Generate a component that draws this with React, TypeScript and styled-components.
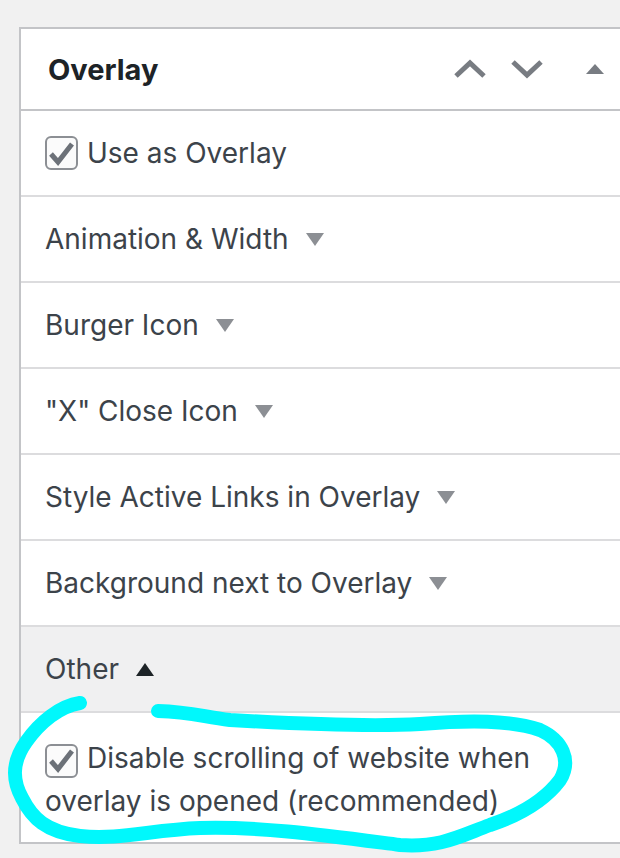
import React from "react";
import styled, { createGlobalStyle } from "styled-components";

const GlobalStyle = createGlobalStyle`
  html, body {
    margin: 0;
    padding: 0;
    background: #f1f1f1;
  }
  body {
    font-family: Inter, "Liberation Sans", sans-serif;
    overflow: hidden;
  }
`;

const Page = styled.div`
  position: relative;
  width: 620px;
  height: 858px;
  overflow: hidden;
  padding: 27px 0 0 19px;
  box-sizing: border-box;
`;

const Panel = styled.div`
  width: 640px;
  background: #fff;
  border: 2px solid #c3c4c7;
  border-right: none;
`;

const Header = styled.div`
  height: 80px;
  display: flex;
  align-items: center;
  padding: 0 46px 0 27px;
  border-bottom: 2px solid #c3c4c7;
`;

const Title = styled.h2`
  margin: 0;
  flex: 1;
  font-size: 29px;
  font-weight: 700;
  color: #1d2327;
`;

const HeaderButton = styled.button<{ $narrow?: boolean }>`
  width: ${(p) => (p.$narrow ? "40px" : "57px")};
  margin-left: ${(p) => (p.$narrow ? "20px" : "0")};
  height: 40px;
  padding: 0;
  border: none;
  background: none;
  display: flex;
  align-items: center;
  justify-content: center;
`;

const Row = styled.div<{ $shade?: boolean }>`
  height: 84px;
  display: flex;
  align-items: center;
  padding: 0 24px;
  border-bottom: 2px solid #dcdcde;
  background: ${(p) => (p.$shade ? "#f0f0f1" : "#fff")};
  font-size: 28px;
  color: #3c434a;
`;

const WrapRow = styled.div`
  padding: 24px 60px 19px 24px;
  font-size: 28px;
  line-height: 43px;
  color: #3c434a;
`;

const Caret = styled.span<{ $up?: boolean; $dark?: boolean }>`
  display: inline-block;
  margin-left: 17px;
  width: 0;
  height: 0;
  border-left: 9px solid transparent;
  border-right: 9px solid transparent;
  ${(p) =>
    p.$up
      ? `border-bottom: 13px solid ${p.$dark ? "#1d2327" : "#8c8f94"};`
      : `border-top: 13px solid ${p.$dark ? "#1d2327" : "#8c8f94"};`}
`;

const Box = styled.span`
  display: inline-flex;
  align-items: center;
  justify-content: center;
  width: 33px;
  height: 34px;
  box-sizing: border-box;
  border: 2px solid #8c8f94;
  border-radius: 6px;
  background: #fbfbfb;
  margin-right: 9px;
  vertical-align: -6px;
`;

const Check = () => (
  <Box>
    <svg width="27" height="27" viewBox="0 0 27 27">
      <polyline
        points="3,14 10,22 24,4"
        fill="none"
        stroke="#6c7178"
        strokeWidth="5"
        strokeLinejoin="miter"
      />
    </svg>
  </Box>
);

const Chevron = ({ up }: { up?: boolean }) => (
  <svg width="32" height="20" viewBox="0 0 32 20">
    <polyline
      points={up ? "2,17 16,4 30,17" : "2,3 16,16 30,3"}
      fill="none"
      stroke="#787c82"
      strokeWidth="5"
    />
  </svg>
);

const Scribble = styled.svg`
  position: absolute;
  left: 0;
  top: 0;
  pointer-events: none;
`;

const sections = [
  "Animation & Width",
  "Burger Icon",
  "\"X\" Close Icon",
  "Style Active Links in Overlay",
  "Background next to Overlay",
];

export default function App() {
  return (
    <>
      <GlobalStyle />
      <Page>
        <Panel>
          <Header>
            <Title>Overlay</Title>
            <HeaderButton>
              <Chevron up />
            </HeaderButton>
            <HeaderButton>
              <Chevron />
            </HeaderButton>
            <HeaderButton $narrow>
              <svg width="18" height="11" viewBox="0 0 18 11">
                <polygon points="0,10 9,0 18,10" fill="#787c82" />
              </svg>
            </HeaderButton>
          </Header>
          <Row>
            <Check />
            Use as Overlay
          </Row>
          {sections.map((s) => (
            <Row key={s}>
              {s}
              <Caret />
            </Row>
          ))}
          <Row $shade>
            Other
            <Caret $up $dark />
          </Row>
          <WrapRow>
            <Check />
            Disable scrolling of website when overlay is opened (recommended)
          </WrapRow>
        </Panel>
        <Scribble width="620" height="858" viewBox="0 0 620 858">
          <path
            d="M80,703 C60,706 40,722 26,742 C12,762 12,780 22,798 C32,818 46,832 80,836 C120,840 150,830 200,828 C260,826 330,836 400,845 C440,848 460,836 490,825 C520,815 545,800 560,780 C572,760 562,740 540,730 C510,720 470,720 420,724 C370,727 300,724 230,720 C200,716 190,712 158,711"
            fill="none"
            stroke="#00f8fc"
            strokeWidth="14"
            strokeLinecap="round"
            strokeLinejoin="round"
          />
        </Scribble>
      </Page>
    </>
  );
}
